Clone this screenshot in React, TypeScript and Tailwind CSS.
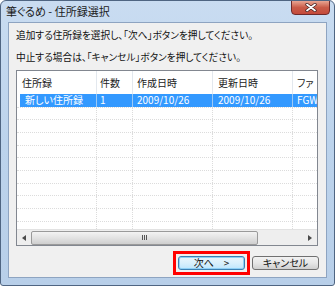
import React from "react";

const jp = "font-['MS_UI_Gothic','Noto_Sans_CJK_JP',sans-serif] [font-feature-settings:'palt']";

const cols = [
  { label: "住所録", w: "w-[80px]", pl: "pl-[5px]" },
  { label: "件数", w: "w-[36px]", pl: "pl-[3px]" },
  { label: "作成日時", w: "w-[80px]", pl: "pl-[4px]" },
  { label: "更新日時", w: "w-[80px]", pl: "pl-[5px]" },
  { label: "ファ", w: "w-[80px]", pl: "pl-[4px]" },
];

const row = ["新しい住所録", "1", "2009/10/26", "2009/10/26", "FGW"];

export default function App() {
  return (
    <div className={`w-[335px] h-[286px] flex flex-col bg-gradient-to-b from-[#c9dcf1] via-[#bcd3ec] to-[#b8cfe9] border border-[#4f6582] rounded-t-[6px] rounded-b-[3px] overflow-hidden ${jp}`}>
      {/* title bar */}
      <div className="h-[21px] flex items-start justify-between pl-[5px] pr-[4px] shrink-0">
        <span className="mt-[4px] text-[11px] leading-[13px] text-[#1a1a1a]">筆ぐるめ - 住所録選択</span>
        <div className="w-[39px] h-[15px] -mt-px rounded-b-[4px] border border-[#6e2a2a] bg-gradient-to-b from-[#e8a593] via-[#c95b48] to-[#c44a3a] flex items-center justify-center">
          <svg width="12" height="9" viewBox="0 0 12 9">
            <path d="M2 1.5 L10 7.5 M10 1.5 L2 7.5" stroke="#3a1a1a" strokeWidth="3.2" strokeLinecap="round" />
            <path d="M2 1.5 L10 7.5 M10 1.5 L2 7.5" stroke="#ffffff" strokeWidth="1.8" strokeLinecap="round" />
          </svg>
        </div>
      </div>

      {/* client area */}
      <div className="mx-[7px] mb-[7px] flex-1 bg-[#f0f0f0] border border-[#8ea4c1] flex flex-col px-[7px]">
        <p className="mt-[6px] text-[9.7px] leading-[12px] text-[#111]">追加する住所録を選択し、「次へ」ボタンを押してください。</p>
        <p className="mt-[10px] text-[9.7px] leading-[12px] text-[#111]">中止する場合は、「キャンセル」ボタンを押してください。</p>

        {/* list view */}
        <div className="mt-[7px] w-[302px] h-[176px] border border-[#828790] bg-white flex flex-col overflow-hidden">
          <div className="flex-1 overflow-hidden relative">
            {/* header */}
            <div className="flex h-[23px] items-center whitespace-nowrap">
              {cols.map((c, i) => (
                <div key={i} className={`${c.w} shrink-0 h-full flex items-center ${c.pl} border-r border-[#e3e8ee] text-[10px] text-[#222]`}>
                  {c.label}
                </div>
              ))}
            </div>
            {/* selected row */}
            <div className="flex h-[12.67px] whitespace-nowrap">
              {row.map((v, i) => (
                <div
                  key={i}
                  className={`${cols[i].w} shrink-0 h-full flex items-center ${cols[i].pl} bg-[#3399ff] text-white text-[10px] leading-none border-r border-[#9cc9f5] ${i === 0 ? "ml-[3px] !w-[77px] pl-[2px]" : ""}`}
                >
                  {v}
                </div>
              ))}
            </div>
            {/* empty grid rows */}
            {Array.from({ length: 10 }).map((_, r) => (
              <div key={r} className="flex h-[12.67px] border-t border-dotted border-[#dcdcdc]">
                {cols.map((c, i) => (
                  <div key={i} className={`${c.w} shrink-0 h-full border-r border-dotted border-[#dcdcdc]`} />
                ))}
              </div>
            ))}
          </div>

          {/* horizontal scrollbar */}
          <div className="h-[16px] shrink-0 flex items-center bg-[#eeeeee] border-t border-[#e2e2e2]">
            <div className="w-[14px] h-full flex items-center justify-center">
              <svg width="4" height="6" viewBox="0 0 4 6"><path d="M4 0 L0 3 L4 6 Z" fill="#4a4a4a" /></svg>
            </div>
            <div className="w-[227px] h-[14px] rounded-[2px] border border-[#9a9a9a] bg-gradient-to-b from-[#f3f3f3] via-[#e2e2e2] to-[#cfcfcf] flex items-center justify-center">
              <div className="flex gap-[1px]">
                <div className="w-px h-[5px] bg-[#555]" />
                <div className="w-px h-[5px] bg-[#555]" />
                <div className="w-px h-[5px] bg-[#555]" />
              </div>
            </div>
            <div className="flex-1" />
            <div className="w-[14px] h-full flex items-center justify-center">
              <svg width="4" height="6" viewBox="0 0 4 6"><path d="M0 0 L4 3 L0 6 Z" fill="#4a4a4a" /></svg>
            </div>
          </div>
        </div>

        {/* buttons */}
        <div className="mt-[5px] flex items-center justify-end gap-[2px]">
          <div className="border-[3px] border-[#ff0000] p-[2px]">
            <button className="w-[67px] h-[14px] rounded-[3px] border border-[#3c7fb1] bg-gradient-to-b from-[#eaf6fd] via-[#d9f0fc] to-[#bee6fd] shadow-[inset_0_0_0_1px_#8ed0f6] text-[10px] leading-none text-[#111] flex items-center justify-center gap-[10px]">
              <span>次へ</span><span>&gt;</span>
            </button>
          </div>
          <button className="w-[67px] h-[14px] rounded-[3px] border border-[#707070] bg-gradient-to-b from-[#f2f2f2] via-[#e6e6e6] to-[#cfcfcf] text-[10px] leading-none text-[#111] flex items-center justify-center">
            キャンセル
          </button>
        </div>
      </div>
    </div>
  );
}
